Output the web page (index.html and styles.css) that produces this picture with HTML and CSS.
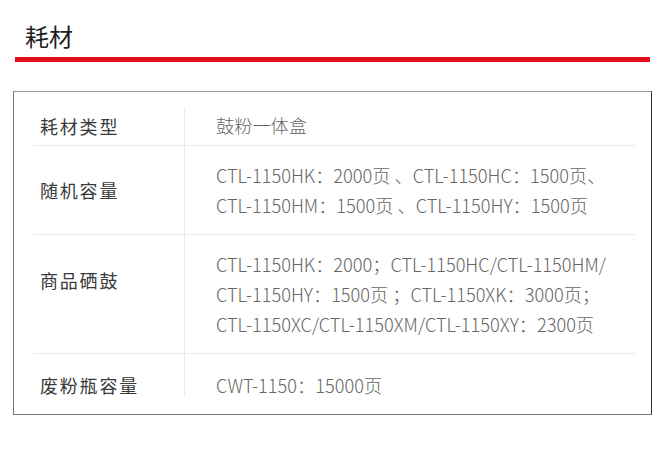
FILE: index.html
```html
<!DOCTYPE html>
<html lang="zh-CN">
<head>
<meta charset="utf-8">
<title>耗材</title>
<link rel="stylesheet" href="styles.css">
</head>
<body>
<div class="page">
  <h2 class="section-title">耗材</h2>
  <div class="red-rule"></div>
  <div class="spec-box">
    <div class="spec-table">
      <div class="spec-row">
        <div class="spec-label">耗材类型</div>
        <div class="spec-value">鼓粉一体盒</div>
      </div>
      <div class="spec-row">
        <div class="spec-label">随机容量</div>
        <div class="spec-value">CTL-1150HK：2000页 、CTL-1150HC：1500页、<br>CTL-1150HM：1500页 、CTL-1150HY：1500页</div>
      </div>
      <div class="spec-row">
        <div class="spec-label spec-label--high">商品硒鼓</div>
        <div class="spec-value">CTL-1150HK：2000；CTL-1150HC/CTL-1150HM/<br>CTL-1150HY：1500页 ；CTL-1150XK：3000页；<br>CTL-1150XC/CTL-1150XM/CTL-1150XY：2300页</div>
      </div>
      <div class="spec-row spec-row--last">
        <div class="spec-label">废粉瓶容量</div>
        <div class="spec-value">CWT-1150：15000页</div>
      </div>
    </div>
  </div>
</div>
</body>
</html>
```

FILE: styles.css
```css
* { box-sizing: border-box; }
html, body {
  margin: 0;
  padding: 0;
  background: #fff;
}
body {
  font-family: "Noto Sans CJK SC", "Noto Sans", sans-serif;
  color: #333;
}
.page {
  padding-top: 21px;
}
.section-title {
  margin: 0;
  padding-left: 25px;
  font-size: 24px;
  line-height: 30px;
  font-weight: 400;
  color: #1e1e1e;
}
.red-rule {
  margin: 6px 0 0 15px;
  width: 635px;
  height: 5px;
  background: #e50f1c;
}
.spec-box {
  margin: 29px 0 0 13px;
  width: 639px;
  border: 1px solid #777;
  border-top-color: #999;
  border-right-color: #333;
  padding: 15px 16px 18px 19px;
}
.spec-table {
  display: flex;
  flex-direction: column;
}
.spec-row {
  display: grid;
  grid-template-columns: 152px 1fr;
  border-bottom: 1px solid #eaeaea;
}
.spec-row--last {
  border-bottom: none;
}
.spec-label {
  border-right: 1px solid #ececec;
  padding-left: 7px;
  font-size: 18px;
  font-weight: 400;
  letter-spacing: 1.8px;
  color: #3a3a3a;
  display: flex;
  align-items: center;
}
.spec-label--high {
  padding-bottom: 28px;
}
.spec-value {
  padding: 14px 0 14px 31px;
  font-size: 18.2px;
  font-weight: 300;
  line-height: 30px;
  color: #666;
  white-space: nowrap;
}
.spec-row:first-child .spec-value {
  padding: 3px 0 5px 31px;
}
.spec-row--last .spec-value {
  padding: 20px 0 0 31px;
  line-height: 22px;
}
.spec-row--last .spec-label {
  align-items: flex-start;
  padding-top: 20px;
  line-height: 22px;
}
```
